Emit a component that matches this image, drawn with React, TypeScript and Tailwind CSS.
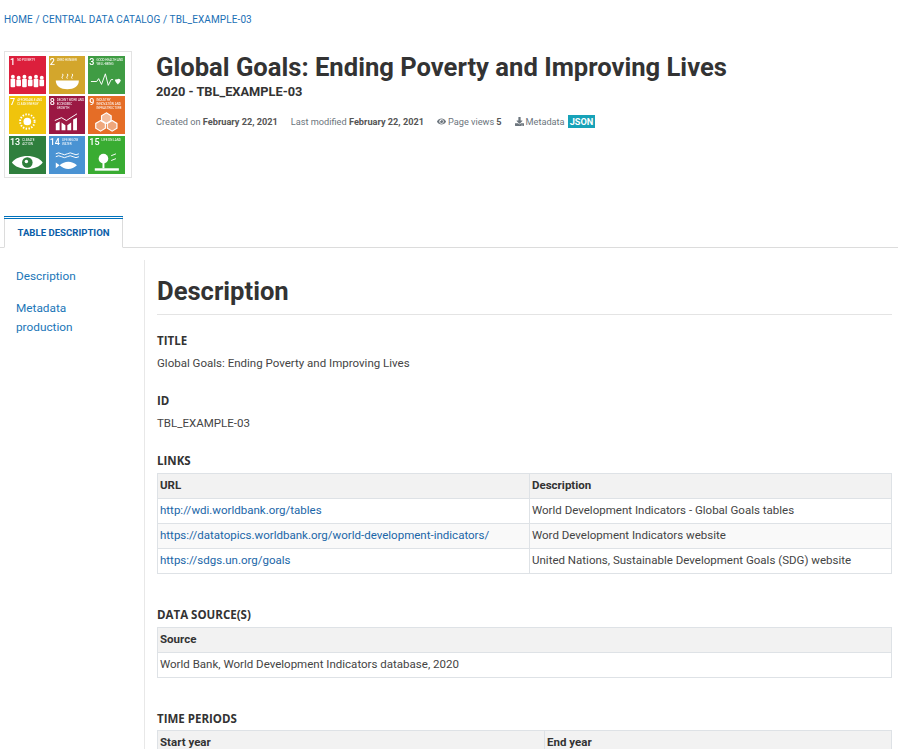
import { FaDownload, FaEye } from "react-icons/fa";
import type { ReactNode } from "react";

const tiles: { n: string; label: string; color: string; icon: ReactNode }[] = [
  {
    n: "1",
    label: "NO POVERTY",
    color: "bg-[#dc1f3c]",
    icon: (
      <g fill="#fff">
        {[3, 9, 15, 21, 27, 33].map((x, i) => (
          <g key={x}>
            <circle cx={x} cy={i % 2 ? 5 : 4} r="2" />
            <rect x={x - 2.4} y={i % 2 ? 7 : 6} width="4.8" height={i % 2 ? 7 : 9} rx="1" />
          </g>
        ))}
      </g>
    ),
  },
  {
    n: "2",
    label: "ZERO HUNGER",
    color: "bg-[#d3a62c]",
    icon: (
      <g>
        <path d="M6 8h24c0 6-5 9-12 9S6 14 6 8z" fill="#fff" />
        <path d="M13 6c-2-2 2-3 0-5M18 6c-2-2 2-3 0-5M23 6c-2-2 2-3 0-5" stroke="#fff" fill="none" />
      </g>
    ),
  },
  {
    n: "3",
    label: "GOOD HEALTH AND WELL-BEING",
    color: "bg-[#3f9c43]",
    icon: (
      <g fill="none" stroke="#fff">
        <path d="M2 9h6l2-3 3 6 4-11 3 12 3-6h2" />
        <path d="M29 7c2-2 4 0 4 1s-2 3-3 4c-1-1-3-3-3-4s1-2 2-1z" fill="#fff" stroke="none" />
      </g>
    ),
  },
  {
    n: "7",
    label: "AFFORDABLE AND CLEAN ENERGY",
    color: "bg-[#f0c40c]",
    icon: (
      <g>
        <circle cx="18" cy="9" r="4" fill="#fff" />
        <circle cx="18" cy="9" r="7.5" fill="none" stroke="#fff" strokeWidth="2" strokeDasharray="1.5 1.5" />
      </g>
    ),
  },
  {
    n: "8",
    label: "DECENT WORK AND ECONOMIC GROWTH",
    color: "bg-[#9b1843]",
    icon: (
      <g fill="#fff">
        <path d="M6 18V11l4-2v9zM12 18V10l4 3v5zM18 18v-5l4-3v8zM24 18V7l4-2v13z" />
        <path d="M5 8l7-3 5 3 11-7" stroke="#fff" fill="none" />
      </g>
    ),
  },
  {
    n: "9",
    label: "INDUSTRY, INNOVATION AND INFRASTRUCTURE",
    color: "bg-[#e56d26]",
    icon: (
      <g fill="none" stroke="#fff" strokeWidth="1.2">
        <path d="M18 0l5 3v5l-5 3-5-3V3z" fill="#fff" fillOpacity="0.55" />
        <path d="M12 8l5 3v5l-5 3-5-3v-5z" fill="#fff" fillOpacity="0.4" />
        <path d="M24 8l5 3v5l-5 3-5-3v-5z" fill="#fff" fillOpacity="0.4" />
      </g>
    ),
  },
  {
    n: "13",
    label: "CLIMATE ACTION",
    color: "bg-[#2f7f3d]",
    icon: (
      <g>
        <path d="M2 10c6-9 26-9 32 0-6 9-26 9-32 0z" fill="#fff" />
        <circle cx="18" cy="10" r="5.5" fill="#2f7f3d" />
        <circle cx="17" cy="9" r="1.8" fill="#fff" />
      </g>
    ),
  },
  {
    n: "14",
    label: "LIFE BELOW WATER",
    color: "bg-[#4a93d3]",
    icon: (
      <g>
        <path d="M6 1q3-2 6 0t6 0 6 0 6 0M6 4q3-2 6 0t6 0 6 0 6 0" stroke="#fff" fill="none" />
        <path d="M10 13c5-5 13-5 18 0-5 5-13 5-18 0zM10 13l-4-3v6z" fill="#fff" />
      </g>
    ),
  },
  {
    n: "15",
    label: "LIFE ON LAND",
    color: "bg-[#39ac32]",
    icon: (
      <g fill="#fff">
        <circle cx="15" cy="6" r="5" />
        <rect x="14" y="9" width="2" height="7" />
        <path d="M23 3l5-2M23 8l5-2" stroke="#fff" />
        <rect x="6" y="16" width="25" height="2.5" />
      </g>
    ),
  },
];

function GoalsLogo() {
  return (
    <div className="w-[128px] h-[127px] shrink-0 border border-[#e3e3e3] pl-[4px] pr-[6px] pt-[4px] grid grid-cols-3 gap-x-[3px] gap-y-[2px] content-start">
      {tiles.map((t) => (
        <div key={t.n} className={`${t.color} h-[38px] px-[1px] pt-[1px] flex flex-col justify-between blur-[0.4px]`}>
          <div className="flex gap-[2px] items-start text-white">
            <span className="text-[9px] leading-[10px] font-medium">{t.n}</span>
            <span className="text-[3px] leading-[4px] pt-[1px]">{t.label}</span>
          </div>
          <svg viewBox="0 0 36 19" className="w-full h-[22px] mb-[1px]">
            {t.icon}
          </svg>
        </div>
      ))}
    </div>
  );
}

function Label({ children }: { children: ReactNode }) {
  return <div className="font-['Open_Sans',sans-serif] font-bold text-[11.52px] leading-[16px] text-[#333]">{children}</div>;
}

function Th({ children, className = "" }: { children: ReactNode; className?: string }) {
  return <th className={`border border-[#dee2e6] px-[2px] h-[25px] text-left font-bold text-[11.52px] text-[#333] ${className}`}>{children}</th>;
}

function Td({ children }: { children: ReactNode }) {
  return <td className="border border-[#dee2e6] px-[2px] h-[25px] text-[11.52px] text-[#444]">{children}</td>;
}

const links = [
  ["http://wdi.worldbank.org/tables", "World Development Indicators - Global Goals tables"],
  ["https://datatopics.worldbank.org/world-development-indicators/", "Word Development Indicators website"],
  ["https://sdgs.un.org/goals", "United Nations, Sustainable Development Goals (SDG) website"],
];

export default function App() {
  return (
    <div className="h-[749px] overflow-hidden bg-white font-['Roboto',sans-serif] text-[#333]">
      {/* Breadcrumb */}
      <div className="px-[4px] pt-[13px] text-[10px] leading-[13px] tracking-[0.11px] uppercase text-[#1a6fb5]">
        Home / Central Data Catalog / TBL_EXAMPLE-03
      </div>

      {/* Header */}
      <header className="flex pl-[4px] pt-[25px] gap-[24px]">
        <GoalsLogo />
        <div>
          <h1 className="text-[25.6px] leading-[32px] font-bold text-[#333]">Global Goals: Ending Poverty and Improving Lives</h1>
          <div className="text-[12.8px] leading-[16px] font-bold mt-[1px]">2020 - TBL_EXAMPLE-03</div>
          <div className="flex items-center text-[9.2px] leading-[13px] text-[#6c757d] mt-[15px]">
            <span>Created on <b className="text-[#555]">February 22, 2021</b></span>
            <span className="ml-[13px]">Last modified <b className="text-[#555]">February 22, 2021</b></span>
            <span className="ml-[13px] flex items-center gap-[2px]">
              <FaEye size={9} /> Page views <b className="text-[#555]">5</b>
            </span>
            <span className="ml-[13px] flex items-center gap-[2px]">
              <FaDownload size={9} /> Metadata
            </span>
            <span className="ml-[3px] bg-[#17a2b8] text-white font-bold px-[2px] h-[13px] leading-[13px]">JSON</span>
          </div>
        </div>
      </header>

      {/* Tabs */}
      <div className="mt-[38px] pl-[4px] border-b border-[#dcdcdc] h-[32px]">
        <div className="w-[119px] h-[32px] border border-[#dcdcdc] border-b-white border-t-0 bg-white">
          <div className="h-[3px] -mx-[1px] border-t border-b border-[#0071bc]" />
          <div className="text-center text-[9.6px] font-bold leading-[28px] text-[#0b5ea8]">TABLE DESCRIPTION</div>
        </div>
      </div>

      {/* Body */}
      <div className="flex mt-[12px]">
        <nav className="w-[145px] shrink-0 border-r border-[#e8e8e8] pl-[16px] pt-[7px] text-[11.8px] leading-[19px] text-[#1a76b8] h-[600px]">
          <div>Description</div>
          <div className="mt-[13px]">
            Metadata
            <br />
            production
          </div>
        </nav>
        <main className="flex-1 pl-[12px] pr-[6px]">
          <h2 className="text-[25.6px] leading-[31px] font-bold text-[#333] mt-[16px] pb-[7px] border-b border-[#e4e4e4]">Description</h2>

          <div className="mt-[18px]">
            <Label>TITLE</Label>
            <div className="text-[11.52px] leading-[16px] mt-[6px] text-[#444]">Global Goals: Ending Poverty and Improving Lives</div>
          </div>
          <div className="mt-[22px]">
            <Label>ID</Label>
            <div className="text-[11.52px] leading-[16px] mt-[6px] text-[#444]">TBL_EXAMPLE-03</div>
          </div>

          <div className="mt-[22px]">
            <Label>LINKS</Label>
            <table className="w-full border-collapse mt-[4px] table-fixed">
              <thead>
                <tr className="bg-[#f2f2f2]">
                  <Th className="w-[372px]">URL</Th>
                  <Th>Description</Th>
                </tr>
              </thead>
              <tbody>
                {links.map(([url, desc], i) => (
                  <tr key={url} className={i === 1 ? "bg-[#f9f9f9]" : ""}>
                    <Td><span className="text-[#1a66a8]">{url}</span></Td>
                    <Td>{desc}</Td>
                  </tr>
                ))}
              </tbody>
            </table>
          </div>

          <div className="mt-[33px]">
            <Label>DATA SOURCE(S)</Label>
            <table className="w-full border-collapse mt-[4px]">
              <thead>
                <tr className="bg-[#f2f2f2]"><Th>Source</Th></tr>
              </thead>
              <tbody>
                <tr><Td>World Bank, World Development Indicators database, 2020</Td></tr>
              </tbody>
            </table>
          </div>

          <div className="mt-[33px]">
            <Label>TIME PERIODS</Label>
            <table className="w-full border-collapse mt-[3px] table-fixed">
              <thead>
                <tr className="bg-[#f2f2f2]">
                  <Th className="w-[387px]">Start year</Th>
                  <Th>End year</Th>
                </tr>
              </thead>
            </table>
          </div>
        </main>
      </div>
    </div>
  );
}
